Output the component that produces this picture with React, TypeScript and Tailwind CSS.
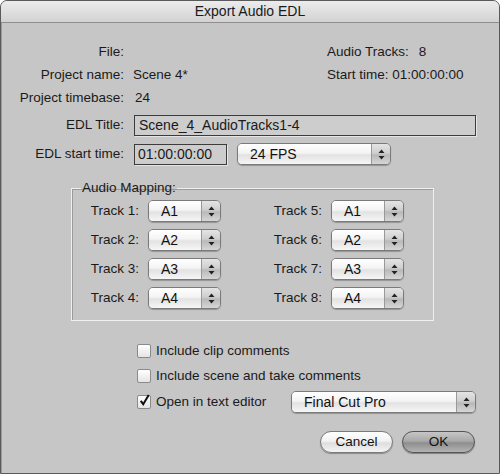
import React from "react";

const FONT = { fontFamily: '"Liberation Sans", Arial, sans-serif' };

function Arrows() {
  return (
    <svg width="7" height="11" viewBox="0 0 7 11">
      <path d="M3.5 0.5 L6.5 4 L0.5 4 Z" fill="#222" />
      <path d="M3.5 10.5 L6.5 7 L0.5 7 Z" fill="#222" />
    </svg>
  );
}

function Popup({ value, className }: { value: string; className: string }) {
  return (
    <div
      className={`flex h-[22px] overflow-hidden rounded-[5px] border border-[#7a7a7a] shadow-[0_1px_1px_rgba(0,0,0,0.25)] ${className}`}
    >
      <div className="flex flex-1 items-center bg-[linear-gradient(#ffffff_0%,#f4f4f4_45%,#e2e2e2_55%,#f6f6f6_100%)] pl-[12px] text-[14px] text-[#111]">
        {value}
      </div>
      <div className="flex w-[19px] items-center justify-center border-l border-[#999] bg-[linear-gradient(#e4e4e4_0%,#cfcfcf_45%,#b9b9b9_55%,#d6d6d6_100%)]">
        <Arrows />
      </div>
    </div>
  );
}

function Checkbox({ checked, label }: { checked?: boolean; label: string }) {
  return (
    <div className="flex h-[24px] items-center">
      <div className="flex h-[14px] w-[14px] items-center justify-center rounded-[2px] border border-[#8a8a8a] bg-[linear-gradient(#ffffff,#e4e4e4)]">
        {checked && (
          <svg width="13" height="14" viewBox="0 0 13 14" className="-mt-[4px] ml-[1px]">
            <path d="M2 8 L5 12 L11.5 1" stroke="#111" strokeWidth="2.4" fill="none" />
          </svg>
        )}
      </div>
      <span className="ml-[5px] text-[13.5px] text-[#1a1a1a]">{label}</span>
    </div>
  );
}

function TrackRow({ n, a, labelW }: { n: number; a: string; labelW: string }) {
  return (
    <div className="flex h-[22px] items-center">
      <span className={`${labelW} text-right text-[13.5px] text-[#1a1a1a]`}>Track {n}:</span>
      <Popup value={a} className="ml-[9px] w-[73px]" />
    </div>
  );
}

export default function App() {
  const maps = ["A1", "A2", "A3", "A4"];
  return (
    <div
      className="flex h-[474px] w-[500px] flex-col overflow-hidden rounded-t-[7px] border border-[#5a5a5a] bg-[#c6c6c6]"
      style={FONT}
    >
      {/* title bar */}
      <div className="flex h-[22px] shrink-0 items-center justify-center border-b border-[#8e8e8e] bg-[linear-gradient(#ececec,#d2d2d2)] text-[14px] text-[#1a1a1a]">
        Export Audio EDL
      </div>

      <div className="flex flex-1 flex-col border-l border-[#9a9a9a] text-[13.5px] text-[#1a1a1a]">
        {/* info rows */}
        <div className="mt-[18px] flex h-[23px] items-center">
          <span className="w-[122px] text-right">File:</span>
          <span className="ml-[9px] w-[194px]"></span>
          <span>Audio Tracks:</span>
          <span className="ml-[10px]">8</span>
        </div>
        <div className="flex h-[23px] items-center">
          <span className="w-[122px] text-right">Project name:</span>
          <span className="ml-[9px] w-[194px]">Scene 4*</span>
          <span>Start time: 01:00:00:00</span>
        </div>
        <div className="flex h-[23px] items-center">
          <span className="w-[122px] text-right">Project timebase:</span>
          <span className="ml-[11px]">24</span>
        </div>

        {/* EDL title */}
        <div className="mt-[5px] flex h-[21px] items-center">
          <span className="w-[122px] text-right">EDL Title:</span>
          <div className="ml-[10px] flex h-[21px] w-[342px] items-center border border-[#3c3c3c] bg-[#cdcdcd] pl-[4px] text-[14px] shadow-[1px_1px_0_#e6e6e6]">
            Scene_4_AudioTracks1-4
          </div>
        </div>

        <div className="mt-[7px] flex h-[22px] items-center">
          <span className="w-[122px] text-right">EDL start time:</span>
          <div className="ml-[10px] flex h-[21px] w-[93px] items-center border border-[#3c3c3c] bg-[#cdcdcd] pl-[3px] text-[14px] shadow-[1px_1px_0_#e6e6e6]">
            01:00:00:00
          </div>
          <Popup value="24 FPS" className="ml-[10px] w-[154px]" />
        </div>

        {/* audio mapping */}
        <fieldset className="mx-0 ml-[69px] mt-[16px] h-[140px] w-[363px] border border-[#f0f0f0] px-0 pt-[5px] shadow-[inset_1px_1px_0_#9a9a9a]">
          <legend className="ml-[9px] px-[1px] text-[13.5px] leading-[14px]">Audio Mapping:</legend>
          <div className="flex">
            <div className="ml-[8px] flex flex-col gap-[7px]">
              {maps.map((a, i) => (
                <TrackRow key={i} n={i + 1} a={a} labelW="w-[59px]" />
              ))}
            </div>
            <div className="ml-[31px] flex flex-col gap-[7px]">
              {maps.map((a, i) => (
                <TrackRow key={i} n={i + 5} a={a} labelW="w-[70px]" />
              ))}
            </div>
          </div>
        </fieldset>

        {/* options */}
        <div className="ml-[135px] mt-[18px] flex flex-col gap-[1px]">
          <Checkbox label="Include clip comments" />
          <Checkbox label="Include scene and take comments" />
          <div className="mt-[1px] flex items-center">
            <div className="w-[150px]">
              <Checkbox checked label="Open in text editor" />
            </div>
            <Popup value="Final Cut Pro" className="ml-[4px] w-[185px]" />
          </div>
        </div>

        {/* buttons */}
        <div className="mr-[24px] mt-[17px] flex justify-end gap-[9px]">
          <button className="flex h-[22px] w-[73px] items-center justify-center rounded-full border border-[#7a7a7a] bg-[linear-gradient(#ffffff_0%,#f2f2f2_45%,#dedede_55%,#f4f4f4_100%)] text-[13.5px] text-[#111] shadow-[0_1px_1px_rgba(0,0,0,0.3)]">
            Cancel
          </button>
          <button className="flex h-[22px] w-[73px] items-center justify-center rounded-full border border-[#555] bg-[linear-gradient(#c6c6c6_0%,#a9a9a9_45%,#8e8e8e_55%,#b4b4b4_100%)] text-[13.5px] text-[#111] shadow-[0_1px_1px_rgba(0,0,0,0.35)]">
            OK
          </button>
        </div>
      </div>
    </div>
  );
}
